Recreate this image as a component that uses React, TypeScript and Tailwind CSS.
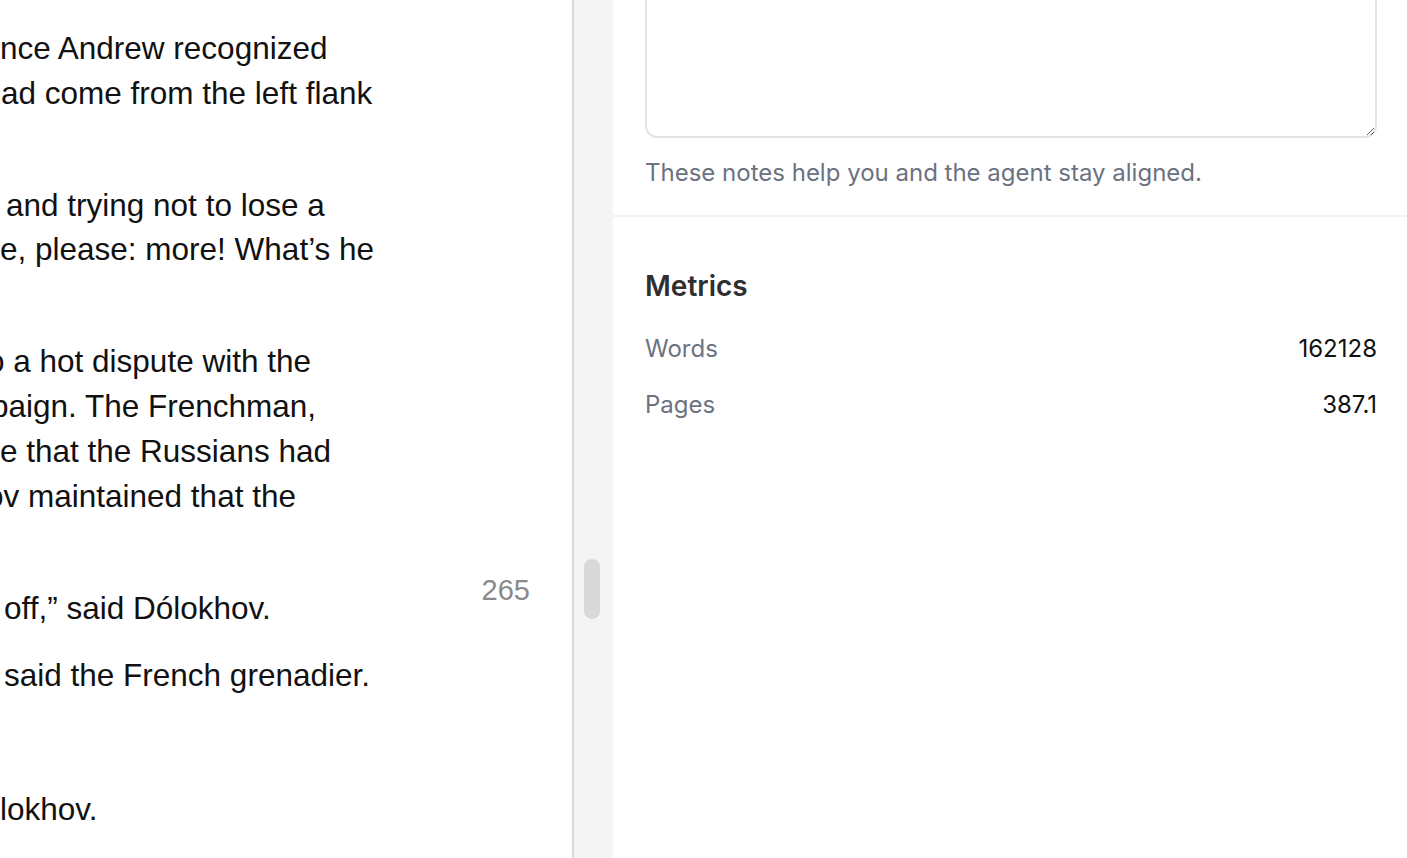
type Line = { text: string; shift?: string }

// Visible tail of each line; the reading column is scrolled horizontally.
const paragraphs: Line[][] = [
  [{ text: 'nce Andrew recognized' }, { text: 'ad come from the left flank', shift: 'ml-[1px]' }, { text: '' }],
  [{ text: 'and trying not to lose a', shift: 'ml-[6px]' }, { text: 'e, please: more! What’s he' }, { text: '' }],
  [
    { text: 'o a hot dispute with the', shift: 'ml-[-13px]' },
    { text: 'paign. The Frenchman,', shift: 'ml-[-9px]' },
    { text: 'e that the Russians had' },
    { text: 'ov maintained that the', shift: 'ml-[-14px]' },
    { text: '' },
  ],
  [{ text: 'off,” said Dólokhov.', shift: 'ml-[4px]' }],
  [{ text: 'said the French grenadier.', shift: 'ml-[4px]' }],
  [{ text: '' }],
  [{ text: 'lokhov.' }],
]

const metrics = [
  { label: 'Words', value: '162128' },
  { label: 'Pages', value: '387.1' },
]

export default function App() {
  return (
    <div className="flex h-[858px] w-full overflow-hidden bg-white">
      <main className="relative w-[574px] shrink-0 overflow-hidden border-r-2 border-[#d9d9d9]">
        <div className="pt-[26px] font-['Liberation_Sans',Arial,sans-serif] text-[31.5px] leading-[44.8px] text-[#111]">
          {paragraphs.map((lines, i) => (
            <div key={i} className="mb-[22.3px]">
              {lines.map((line, j) => (
                <div key={j} className={`whitespace-nowrap ${line.shift ?? ''}`}>
                  {line.text || '\u00a0'}
                </div>
              ))}
            </div>
          ))}
        </div>
        <span className="absolute right-[42px] top-[572px] font-['Liberation_Sans',Arial,sans-serif] text-[29px] leading-[36px] text-[#8a8a8a]">
          265
        </span>
      </main>

      <div className="w-[39px] shrink-0 bg-[#f4f4f4] pl-[10px] pt-[559px]">
        <div className="h-[60px] w-[16px] rounded-full bg-[#d9d9d9]" />
      </div>

      <aside className="flex-1 font-['Inter',sans-serif]">
        <section className="border-b-2 border-[#f2f2f2] pb-[24px] pl-8 pr-[30px]">
          <textarea
            className="block h-[138px] w-full rounded-b-xl border-2 border-t-0 border-[#e1e4e8] bg-white outline-none"
            aria-label="Notes"
          />
          <p className="mt-[17px] text-[24px] leading-[36px] text-[#6b7280]">
            These notes help you and the agent stay aligned.
          </p>
        </section>

        <section className="pl-8 pr-[30px] pt-[48px]">
          <h2 className="text-[28px] font-semibold leading-[42px] text-[#2f2f2f]">Metrics</h2>
          <dl className="mt-[24px] flex flex-col gap-[20px] text-[24px] leading-[36px]">
            {metrics.map((m) => (
              <div key={m.label} className="flex items-center justify-between">
                <dt className="text-[#6b7280]">{m.label}</dt>
                <dd className="text-[#111]">{m.value}</dd>
              </div>
            ))}
          </dl>
        </section>
      </aside>
    </div>
  )
}
